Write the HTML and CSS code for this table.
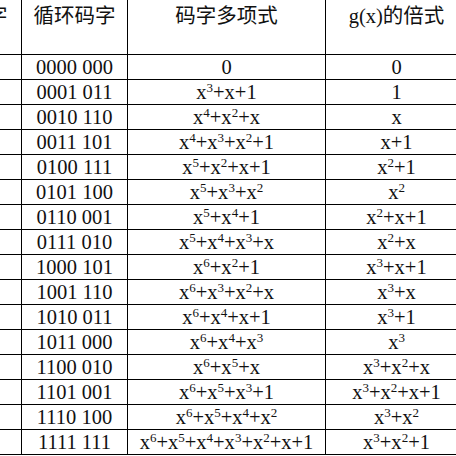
FILE: index.html
```html
<!DOCTYPE html>
<html lang="zh">
<head>
<meta charset="utf-8">
<link rel="stylesheet" href="styles.css">
</head>
<body>
<table class="t">
<colgroup>
<col class="c1"><col class="c2"><col class="c3"><col class="c4">
</colgroup>
<thead>
<tr class="hd"><th>信息码字</th><th>循环码字</th><th>码字多项式</th><th>g(x)的倍式</th></tr>
</thead>
<tbody>
<tr><td></td><td>0000 000</td><td>0</td><td>0</td></tr>
<tr><td></td><td>0001 011</td><td>x<sup>3</sup>+x+1</td><td>1</td></tr>
<tr><td></td><td>0010 110</td><td>x<sup>4</sup>+x<sup>2</sup>+x</td><td>x</td></tr>
<tr><td></td><td>0011 101</td><td>x<sup>4</sup>+x<sup>3</sup>+x<sup>2</sup>+1</td><td>x+1</td></tr>
<tr><td></td><td>0100 111</td><td>x<sup>5</sup>+x<sup>2</sup>+x+1</td><td>x<sup>2</sup>+1</td></tr>
<tr><td></td><td>0101 100</td><td>x<sup>5</sup>+x<sup>3</sup>+x<sup>2</sup></td><td>x<sup>2</sup></td></tr>
<tr><td></td><td>0110 001</td><td>x<sup>5</sup>+x<sup>4</sup>+1</td><td>x<sup>2</sup>+x+1</td></tr>
<tr><td></td><td>0111 010</td><td>x<sup>5</sup>+x<sup>4</sup>+x<sup>3</sup>+x</td><td>x<sup>2</sup>+x</td></tr>
<tr><td></td><td>1000 101</td><td>x<sup>6</sup>+x<sup>2</sup>+1</td><td>x<sup>3</sup>+x+1</td></tr>
<tr><td></td><td>1001 110</td><td>x<sup>6</sup>+x<sup>3</sup>+x<sup>2</sup>+x</td><td>x<sup>3</sup>+x</td></tr>
<tr><td></td><td>1010 011</td><td>x<sup>6</sup>+x<sup>4</sup>+x+1</td><td>x<sup>3</sup>+1</td></tr>
<tr><td></td><td>1011 000</td><td>x<sup>6</sup>+x<sup>4</sup>+x<sup>3</sup></td><td>x<sup>3</sup></td></tr>
<tr><td></td><td>1100 010</td><td>x<sup>6</sup>+x<sup>5</sup>+x</td><td>x<sup>3</sup>+x<sup>2</sup>+x</td></tr>
<tr><td></td><td>1101 001</td><td>x<sup>6</sup>+x<sup>5</sup>+x<sup>3</sup>+1</td><td>x<sup>3</sup>+x<sup>2</sup>+x+1</td></tr>
<tr><td></td><td>1110 100</td><td>x<sup>6</sup>+x<sup>5</sup>+x<sup>4</sup>+x<sup>2</sup></td><td>x<sup>3</sup>+x<sup>2</sup></td></tr>
<tr><td></td><td>1111 111</td><td>x<sup>6</sup>+x<sup>5</sup>+x<sup>4</sup>+x<sup>3</sup>+x<sup>2</sup>+x+1</td><td>x<sup>3</sup>+x<sup>2</sup>+1</td></tr>
</tbody>
</table>
</body>
</html>
```
FILE: styles.css
```css
html, body {
  margin: 0;
  padding: 0;
  background: #fff;
  overflow: hidden;
}
.t {
  border-collapse: collapse;
  table-layout: fixed;
  width: 556px;
  margin-left: -89px;
  margin-top: -1px;
  font-family: "Liberation Serif", "Noto Sans CJK SC", serif;
  font-size: 20.5px;
  color: #111;
}
.c1 { width: 110px; }
.c2 { width: 106px; }
.c3 { width: 198px; }
.c4 { width: 142px; }
.t th, .t td {
  border: 1px solid #000;
  padding: 0;
  text-align: center;
  white-space: nowrap;
  font-weight: normal;
  line-height: 24px;
}
.t td {
  height: 24px;
}
.hd th {
  height: 55px;
  vertical-align: top;
  padding-top: 4px;
  box-sizing: border-box;
}
.t sup {
  font-size: 13px;
  line-height: 0;
  vertical-align: 7px;
}
```
